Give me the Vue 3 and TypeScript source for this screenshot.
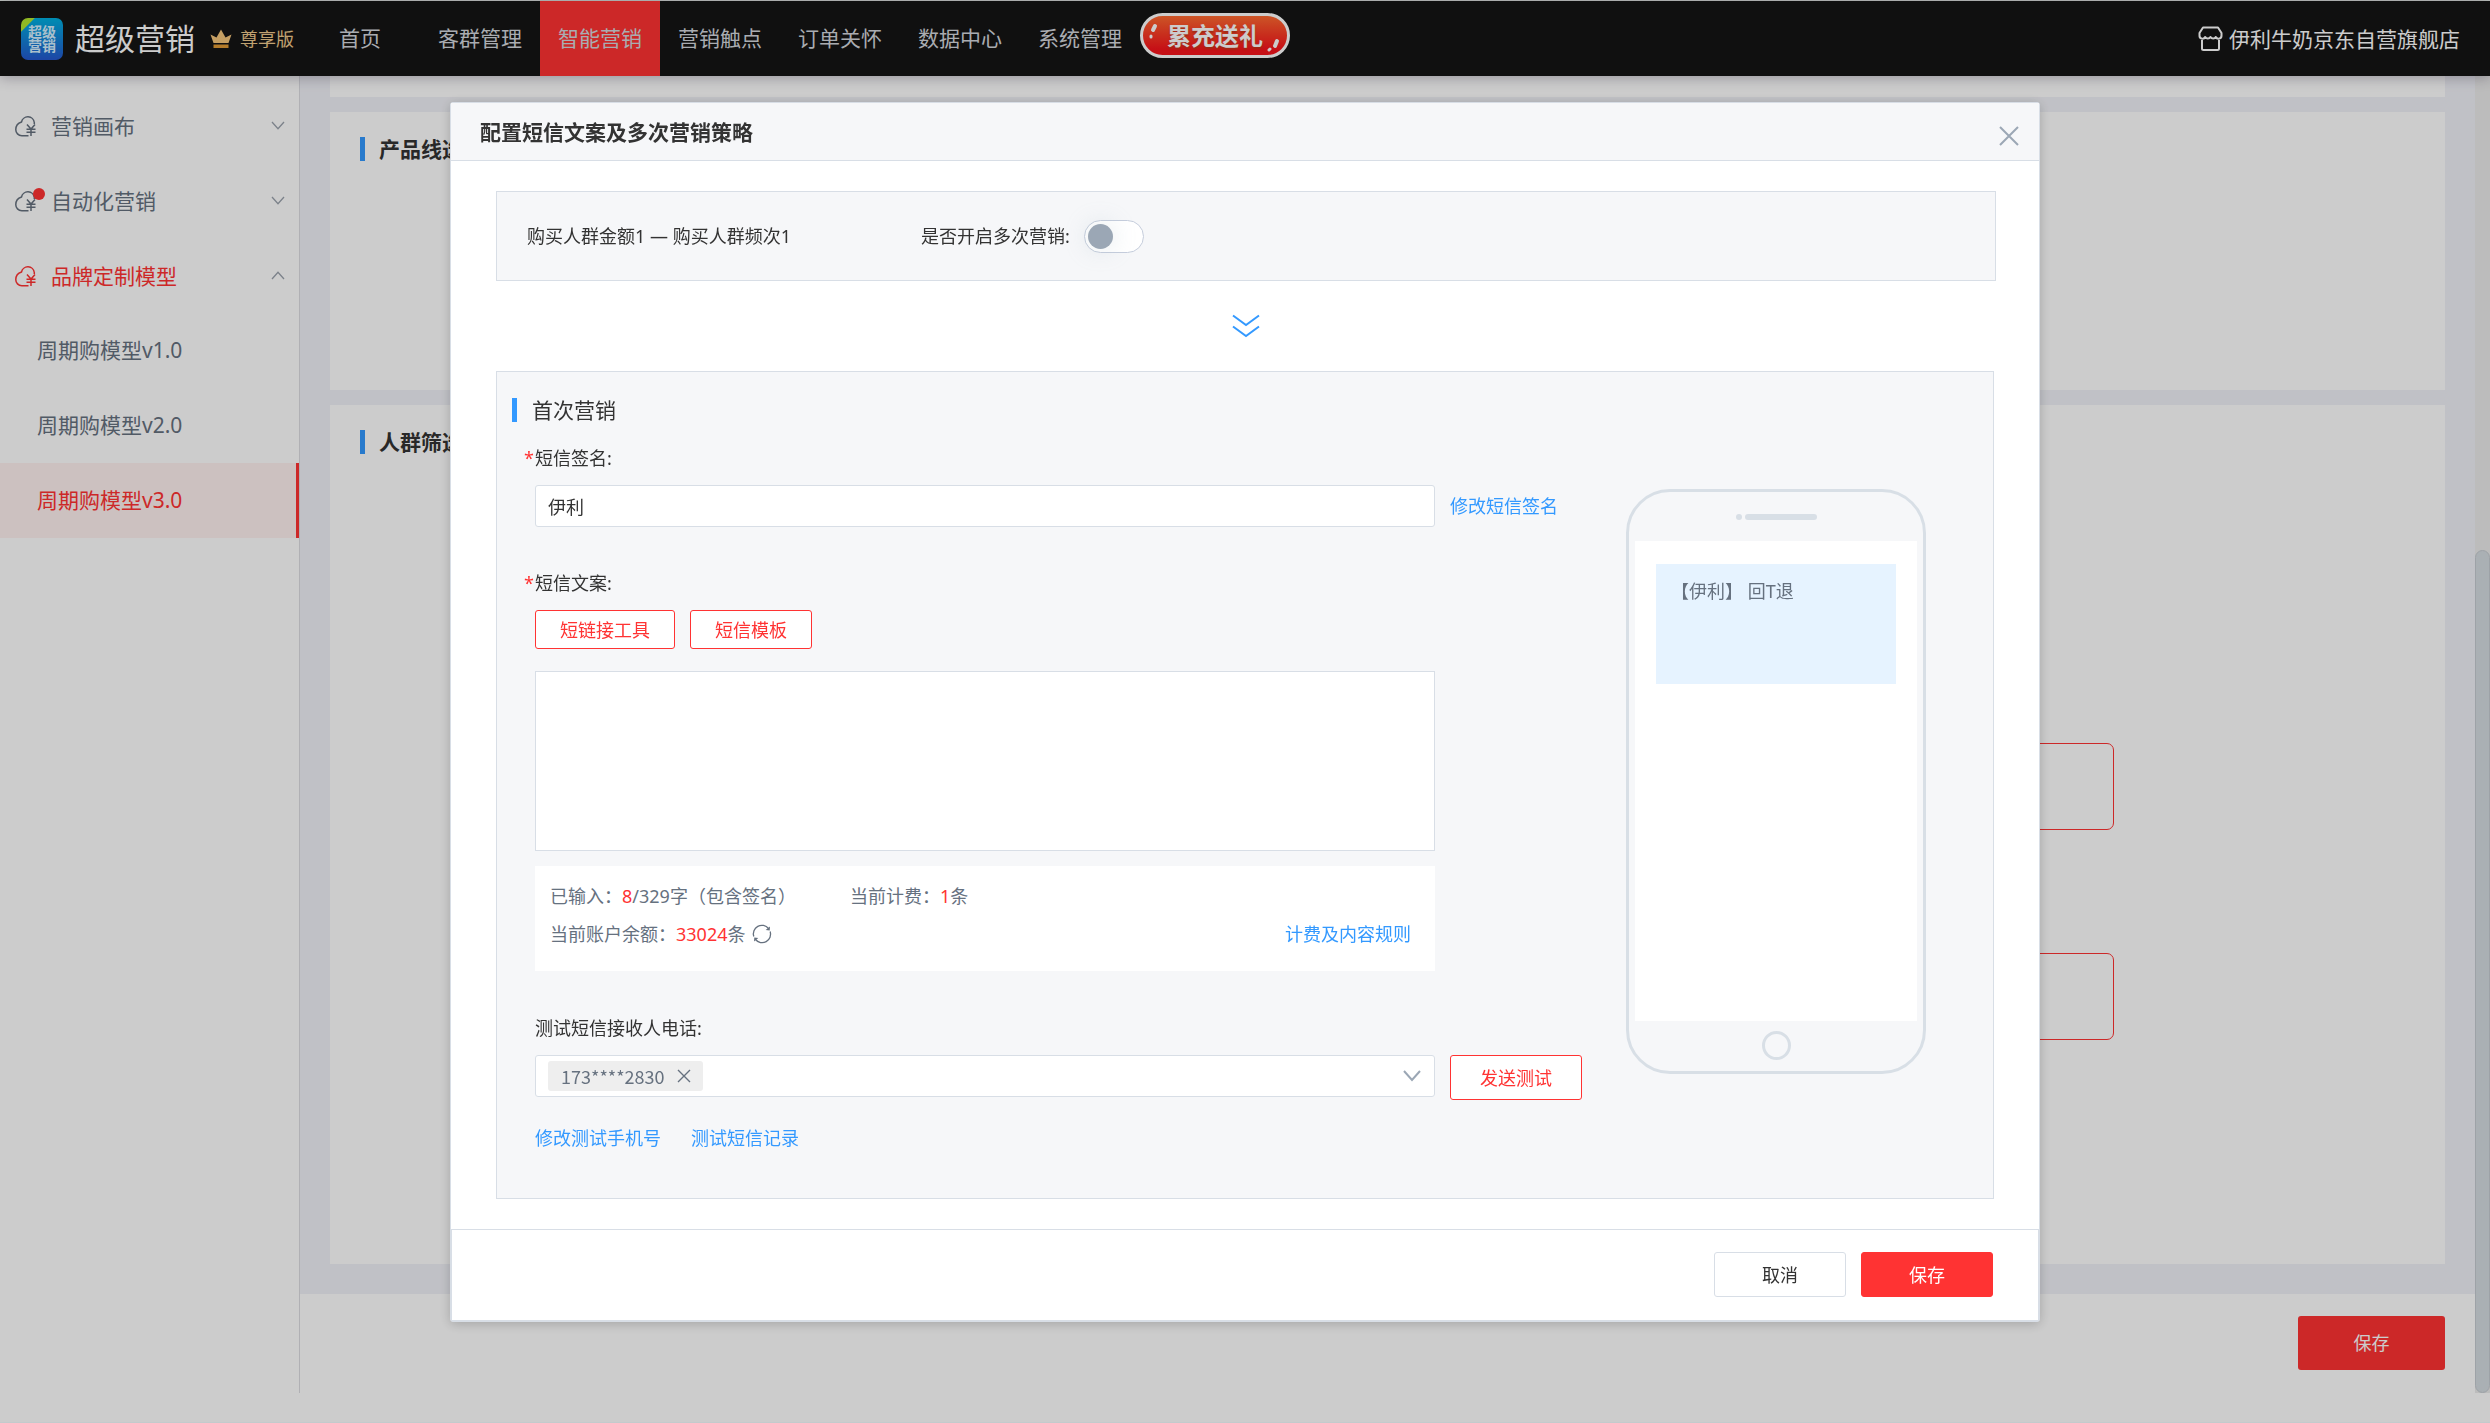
<script setup lang="ts">
import { ref } from 'vue'

interface NavItem { label: string; active?: boolean }
interface MenuItem { label: string; open?: boolean; dot?: boolean }

const nav: NavItem[] = [
  { label: '首页' },
  { label: '客群管理' },
  { label: '智能营销', active: true },
  { label: '营销触点' },
  { label: '订单关怀' },
  { label: '数据中心' },
  { label: '系统管理' },
]

const menu: MenuItem[] = [
  { label: '营销画布' },
  { label: '自动化营销', dot: true },
  { label: '品牌定制模型', open: true },
]

const models: NavItem[] = [
  { label: '周期购模型v1.0' },
  { label: '周期购模型v2.0' },
  { label: '周期购模型v3.0', active: true },
]

const signature = ref('伊利')
const content = ref('')
const repeat = ref(false)
const phones = ref<string[]>(['173****2830'])
</script>

<template>
  <div class="page">
    <header class="topbar">
      <div class="brand">
        <div class="logo"><span>超级营销</span></div>
        <span class="brand-name">超级营销</span>
        <svg class="crown" width="22" height="20" viewBox="0 0 22 20" aria-hidden="true">
          <path d="M3.500 14 L0.500 5.500 L6.500 8.500 L11 0.500 L15.500 8.500 L21.500 5.500 L18.500 14 Z" fill="#f7c77c" />
          <rect x="3.500" y="15.500" width="15" height="3.500" fill="#e09a35" />
        </svg>
        <span class="edition">尊享版</span>
      </div>
      <nav class="nav">
        <a v-for="item in nav" :key="item.label" href="#" class="nav-item" :class="{ active: item.active }">{{ item.label }}</a>
      </nav>
      <button type="button" class="promo">
        <svg width="142" height="37" viewBox="0 0 142 37" aria-hidden="true">
          <g stroke="#fff" stroke-linecap="round" fill="none">
            <path d="M11 9 L9 13" stroke-width="4" />
            <path d="M7 19 V20" stroke-width="3" />
            <path d="M133 24 L131 29" stroke-width="4" />
            <path d="M125 33 L126 32" stroke-width="3" />
          </g>
        </svg>
        <span>累充送礼</span>
      </button>
      <div class="store">
        <svg width="25" height="26" viewBox="0 0 25 26" fill="none" stroke="#fff" stroke-width="2" aria-hidden="true">
          <path d="M5 1.500 H20 L23.500 7 V9.500 A3 3 0 0 1 17.800 11 A3 3 0 0 1 12.500 11 A3 3 0 0 1 7.200 11 A3 3 0 0 1 1.500 9.500 V7 Z" stroke-linejoin="round" />
          <path d="M4 14 V22.500 Q4 24 5.500 24 H19.500 Q21 24 21 22.500 V14" />
        </svg>
        <span>伊利牛奶京东自营旗舰店</span>
      </div>
    </header>

    <div class="body">
      <aside class="sidebar">
        <a v-for="item in menu" :key="item.label" href="#" class="menu-item" :class="{ open: item.open }">
          <span class="menu-icon">
            <svg width="22" height="22" viewBox="0 0 22 22" fill="none" stroke="currentColor" stroke-width="1.500" aria-hidden="true">
              <path d="M19.300 9 V7.500 A6.500 6.500 0 0 0 6.500 7 C3 8.200 0.800 11 0.800 14.500 A6 6 0 0 0 6.800 20.700 H13.500" />
              <path d="M12 9.500 L16 14 L20 9.500 M16 14 V21 M11.500 14.200 H20.500 M11.500 17.300 H20.500" />
            </svg>
            <i v-if="item.dot" class="dot"></i>
          </span>
          <span class="menu-label">{{ item.label }}</span>
          <svg class="arrow" width="14" height="9" viewBox="0 0 14 9" fill="none" stroke="currentColor" stroke-width="1.300" aria-hidden="true">
            <path :d="item.open ? 'M1 8 L7 1.200 L13 8' : 'M1 1 L7 7.800 L13 1'" />
          </svg>
        </a>
        <a v-for="m in models" :key="m.label" href="#" class="sub-item" :class="{ active: m.active }">{{ m.label }}</a>
      </aside>

      <main class="main">
        <div class="cards">
          <section class="card head"></section>
          <section class="card product">
            <h2 class="card-title">产品线选择</h2>
          </section>
          <section class="card crowd">
            <h2 class="card-title">人群筛选</h2>
            <div class="branches">
              <div class="branch"></div>
              <div class="branch"></div>
            </div>
          </section>
        </div>
        <div class="page-foot">
          <button type="button" class="page-save">保存</button>
        </div>
      </main>
      <div class="scrollbar"><div class="thumb"></div></div>
    </div>
  </div>

  <div class="mask">
    <div class="dialog" role="dialog" aria-labelledby="dialog-title">
      <div class="dialog-head">
        <h1 id="dialog-title">配置短信文案及多次营销策略</h1>
        <button type="button" class="close" aria-label="关闭">
          <svg width="20" height="20" viewBox="0 0 20 20" stroke="#9ba7b5" stroke-width="2" aria-hidden="true"><path d="M1 1 L19 19 M19 1 L1 19" /></svg>
        </button>
      </div>

      <div class="dialog-body">
        <div class="summary">
          <span class="summary-name">购买人群金额1 — 购买人群频次1</span>
          <label for="repeat">是否开启多次营销:</label>
          <input id="repeat" v-model="repeat" type="checkbox" class="switch" />
        </div>

        <div class="down">
          <svg width="28" height="24" viewBox="0 0 28 24" fill="none" stroke="#3399ff" stroke-width="2" aria-hidden="true">
            <path d="M1 1.500 L14 11 L27 1.500 M1 12.500 L14 22 L27 12.500" />
          </svg>
        </div>

        <div class="panel">
          <div class="form">
            <h2 class="panel-title">首次营销</h2>

            <label class="label required" for="signature">短信签名:</label>
            <div class="row">
              <input id="signature" v-model="signature" type="text" class="text-input" />
              <a href="#" class="link">修改短信签名</a>
            </div>

            <label class="label required second" for="content">短信文案:</label>
            <div class="tools">
              <button type="button" class="outline small">短链接工具</button>
              <button type="button" class="outline small">短信模板</button>
            </div>
            <div class="row area-row">
              <div class="area-col">
                <textarea id="content" v-model="content" class="area"></textarea>
                <div class="info">
                  <p><span class="typed">已输入：<b>8</b>/329字（包含签名）</span><span>当前计费：<b>1</b>条</span></p>
                  <p>
                    <span>当前账户余额：<b>33024</b>条</span>
                    <button type="button" class="refresh" aria-label="刷新">
                      <svg width="20" height="20" viewBox="0 0 20 20" fill="none" stroke="#66717f" stroke-width="1.300" aria-hidden="true">
                        <path d="M1.800 12.500 A8.500 8.500 0 0 1 16.500 4.500 M18.200 7.500 A8.500 8.500 0 0 1 3.500 15.500" />
                        <path d="M18 2.500 L17.700 6.500 L13.700 6 Z M2 17.500 L2.300 13.500 L6.300 14 Z" fill="#66717f" stroke="none" />
                      </svg>
                    </button>
                    <a href="#" class="link rules">计费及内容规则</a>
                  </p>
                </div>
              </div>
            </div>

            <label class="label third" for="phones">测试短信接收人电话:</label>
            <div class="row">
              <div class="picker">
                <span v-for="p in phones" :key="p" class="tag">
                  {{ p }}
                  <button type="button" aria-label="移除">
                    <svg width="14" height="14" viewBox="0 0 14 14" stroke="#66717f" stroke-width="1.400" aria-hidden="true"><path d="M1 1 L13 13 M13 1 L1 13" /></svg>
                  </button>
                </span>
                <select id="phones"><option value=""></option></select>
                <svg width="18" height="12" viewBox="0 0 18 12" fill="none" stroke="#9ba7b5" stroke-width="2" aria-hidden="true"><path d="M1 1 L9 10 L17 1" /></svg>
              </div>
              <button type="button" class="outline send">发送测试</button>
            </div>
            <div class="links">
              <a href="#" class="link">修改测试手机号</a>
              <a href="#" class="link">测试短信记录</a>
            </div>
          </div>

          <div class="phone">
            <div class="speaker"><i></i><i></i></div>
            <div class="screen">
              <div class="message">【伊利】 回T退</div>
            </div>
            <div class="home"></div>
          </div>
        </div>
      </div>

      <div class="dialog-foot">
        <button type="button" class="cancel">取消</button>
        <button type="button" class="save">保存</button>
      </div>
    </div>
  </div>
</template>

<style>
html,
body {
  margin: 0;
  height: 100%;
  overflow: hidden;
}
</style>

<style scoped>
.page,
.mask {
  font-family: "Noto Sans", "Noto Sans CJK SC", sans-serif;
  font-size: 18px;
  line-height: 24px;
  color: #333;
}
.page *,
.mask * {
  box-sizing: border-box;
}
button,
input,
select,
textarea {
  font: inherit;
  color: inherit;
  margin: 0;
  padding: 0;
  border: 0;
  background: none;
}
h1,
h2,
p {
  margin: 0;
  font-weight: normal;
}
a {
  text-decoration: none;
  color: inherit;
}
svg {
  display: block;
  flex: none;
}

.page {
  display: flex;
  flex-direction: column;
  box-sizing: border-box;
  height: 100vh;
  padding-bottom: 29px;
  border-top: 1px solid #eaefea;
  border-bottom: 1px solid #f4fdff;
  background: #fff;
}
.topbar {
  position: relative;
  z-index: 1;
  display: flex;
  flex: none;
  align-items: center;
  height: 75px;
  background: #141414;
  box-shadow: 0 2px 12px rgba(40, 30, 60, 0.3);
  color: #fff;
}
.brand {
  display: flex;
  align-items: center;
  width: 300px;
  padding-left: 21px;
}
.logo {
  width: 42px;
  height: 42px;
  padding: 7px;
  border-radius: 7px;
  background: linear-gradient(135deg, #b5e62e 0 16%, transparent 17%), linear-gradient(#00b0e0, #2458cf);
  font-size: 14px;
  line-height: 14px;
  font-weight: bold;
  color: #d5f0ff;
}
.brand-name {
  margin-left: 12px;
  font-size: 30px;
  line-height: 40px;
}
.crown {
  margin-left: 15px;
}
.edition {
  margin-left: 8px;
  color: #f0cb8e;
}
.nav {
  display: flex;
  align-self: stretch;
}
.nav-item {
  width: 120px;
  font-size: 21px;
  line-height: 75px;
  text-align: center;
  color: #d4d8de;
}
.nav-item.active {
  background: #ff3333;
}
.promo {
  position: relative;
  align-self: flex-start;
  width: 150px;
  height: 45px;
  margin-top: 12px;
  border: 3px solid #fff;
  border-radius: 23px;
  background: linear-gradient(#ff6a30, #f8141c 85%);
  font-size: 24px;
  line-height: 36px;
  font-weight: bold;
  color: #fff;
  text-shadow: 0 2px 2px #c4341a;
}
.promo svg {
  position: absolute;
  left: 1px;
  top: 1px;
}
.store {
  display: flex;
  gap: 6px;
  align-items: center;
  margin-left: auto;
  padding-right: 30px;
  font-size: 21px;
}

.body {
  display: flex;
  flex: 1;
  min-height: 0;
}
.sidebar {
  flex: none;
  width: 300px;
  padding-top: 12px;
  border-right: 1px solid #dcdde2;
  background: #fff;
  font-size: 21px;
  color: #66717f;
}
.menu-item {
  display: flex;
  align-items: center;
  height: 75px;
  padding: 0 14px 0 15px;
}
.menu-item.open {
  color: #ff3333;
}
.menu-icon {
  position: relative;
  margin-right: 14px;
}
.dot {
  position: absolute;
  top: -2px;
  right: -8px;
  width: 12px;
  height: 12px;
  border-radius: 50%;
  background: #ff3333;
}
.menu-label {
  flex: 1;
}
.arrow {
  color: #9ba3ad;
}
.sub-item {
  display: block;
  padding-left: 37px;
  line-height: 75px;
}
.sub-item.active {
  border-right: 3px solid #ff3333;
  background: #fff2f0;
  color: #ff3333;
}

.main {
  display: flex;
  flex: 1;
  flex-direction: column;
  background: #f1f2f8;
}
.cards {
  display: flex;
  flex: 1;
  flex-direction: column;
  gap: 15px;
  padding: 0 30px 30px;
}
.card {
  background: #fff;
}
.head {
  height: 21px;
}
.product {
  height: 278px;
  padding: 25px 30px;
}
.crowd {
  flex: 1;
  padding: 25px 30px;
}
.card-title {
  padding-left: 14px;
  border-left: 5px solid #3399ff;
  font-size: 21px;
  font-weight: bold;
}
.branches {
  display: flex;
  flex-direction: column;
  gap: 123px;
  margin-top: 289px;
  padding: 0 301px;
}
.branch {
  height: 87px;
  border: 1px solid #ff3333;
  border-radius: 7px;
}
.page-foot {
  display: flex;
  justify-content: flex-end;
  height: 99px;
  padding: 22px 30px 0 0;
  background: #fff;
}
.page-save {
  width: 147px;
  height: 54px;
  border-radius: 3px;
  background: #ff3333;
  color: #fff;
}
.scrollbar {
  display: flex;
  flex: none;
  flex-direction: column;
  justify-content: flex-end;
  width: 15px;
  background: #ebebeb;
}
.thumb {
  height: 64%;
  border: 1px solid #c5cbd1;
  border-radius: 8px;
  background: #d5dce1;
}

.mask {
  position: fixed;
  inset: 0;
  z-index: 10;
  display: flex;
  align-items: flex-start;
  justify-content: center;
  padding-top: 102px;
  background: rgba(0, 0, 0, 0.2);
}
.dialog {
  width: 64%;
  max-width: 1590px;
  border: 1px solid #d8dee6;
  border-radius: 3px;
  background: #fff;
  box-shadow: 0 2px 12px rgba(0, 0, 0, 0.2);
}
.dialog-head {
  display: flex;
  align-items: center;
  justify-content: space-between;
  height: 58px;
  padding: 0 20px 0 29px;
  border-bottom: 1px solid #d8dee6;
  background: #f6f7f9;
}
.dialog-head h1 {
  font-size: 21px;
  font-weight: bold;
}
.close {
  padding-top: 8px;
}
.dialog-body {
  padding: 30px 43px 30px 45px;
}
.summary {
  display: flex;
  align-items: center;
  height: 90px;
  padding: 0 30px;
  border: 1px solid #d8dee6;
  background: #f6f7f9;
}
.summary-name {
  width: 394px;
}
.switch {
  display: flex;
  appearance: none;
  width: 60px;
  height: 33px;
  margin-left: 14px;
  padding: 3px;
  border: 1px solid #c5cddc;
  border-radius: 17px;
  background: #fff;
}
.switch::before {
  content: "";
  width: 25px;
  height: 25px;
  border-radius: 50%;
  background: #9ba7b5;
  box-shadow: 0 0 24px rgba(155, 180, 190, 0.3);
}
.switch:checked::before {
  margin-left: auto;
}
.down {
  display: flex;
  align-items: center;
  justify-content: center;
  height: 90px;
}
.panel {
  display: flex;
  margin-right: 2px;
  padding: 23px 67px 48px 15px;
  border: 1px solid #d8dee6;
  background: #f6f7f9;
}
.form {
  display: flex;
  flex: 1;
  flex-direction: column;
  padding-left: 23px;
}
.panel-title {
  margin: 3px 0 3px -23px;
  padding-left: 15px;
  border-left: 5px solid #3399ff;
  font-size: 21px;
}
.label {
  position: relative;
  align-self: flex-start;
  margin: 21px 0 15px;
}
.required::before {
  content: "*";
  position: absolute;
  left: -11px;
  color: #ff3333;
}
.second {
  margin-top: 44px;
}
.third {
  margin-top: 45px;
}
.row {
  display: grid;
  grid-template-columns: 1fr 176px;
  column-gap: 15px;
}
.link {
  color: #3399ff;
}
.row > .link {
  line-height: 42px;
}
.text-input,
.picker,
.area {
  border: 1px solid #d8dee6;
  border-radius: 3px;
  background: #fff;
}
.text-input {
  height: 42px;
  padding: 0 12px;
}
.tools {
  display: flex;
  gap: 15px;
}
.outline {
  border: 1px solid #ff3333;
  border-radius: 3px;
  background: #fff;
  color: #ff3333;
}
.small {
  height: 39px;
  padding: 0 24px;
}
.area-row {
  margin-top: 22px;
}
.area {
  display: block;
  width: 100%;
  height: 180px;
  padding: 12px;
  border-radius: 0;
  resize: none;
}
.info {
  height: 105px;
  margin-top: 15px;
  padding: 11px 24px 0 15px;
  background: #fff;
  color: #66717f;
}
.info p {
  display: flex;
  align-items: center;
  height: 38px;
}
.info b {
  font-weight: normal;
  color: #ff3333;
}
.typed {
  width: 300px;
}
.refresh {
  margin-left: 7px;
}
.rules {
  margin-left: auto;
}
.picker {
  display: flex;
  align-items: center;
  height: 42px;
  padding: 0 13px 0 12px;
}
.tag {
  display: flex;
  gap: 12px;
  align-items: center;
  height: 30px;
  padding: 0 12px 0 13px;
  border-radius: 3px;
  background: #eee;
  font-family: "Noto Sans CJK SC", sans-serif;
  color: #66717f;
}
.picker select {
  flex: 1;
  appearance: none;
  height: 30px;
}
.send {
  width: 132px;
  height: 45px;
}
.links {
  display: flex;
  gap: 30px;
  margin-top: 26px;
}

.phone {
  display: flex;
  flex: none;
  flex-direction: column;
  align-items: center;
  width: 300px;
  height: 585px;
  margin-top: 94px;
  border: 3px solid #d8dfe6;
  border-radius: 44px;
}
.speaker {
  display: flex;
  gap: 3px;
  height: 49px;
  padding-top: 22px;
}
.speaker i {
  width: 6px;
  height: 6px;
  border-radius: 3px;
  background: #d8dfe6;
}
.speaker i:last-child {
  width: 72px;
}
.screen {
  width: 282px;
  height: 480px;
  padding: 23px 21px;
  background: #fff;
}
.message {
  height: 120px;
  padding: 15px;
  background: #e6f3ff;
  color: #66717f;
}
.home {
  width: 29px;
  height: 29px;
  margin-top: 10px;
  border: 3px solid #d8dfe6;
  border-radius: 50%;
}

.dialog-foot {
  display: flex;
  gap: 15px;
  justify-content: flex-end;
  padding: 22px 45px 23px;
  border: 1px solid #d8dee6;
}
.cancel,
.save {
  width: 132px;
  height: 45px;
  border: 1px solid #d8dee6;
  border-radius: 3px;
  background: #fff;
}
.save {
  border-color: #ff3333;
  background: #ff3333;
  color: #fff;
}
</style>
